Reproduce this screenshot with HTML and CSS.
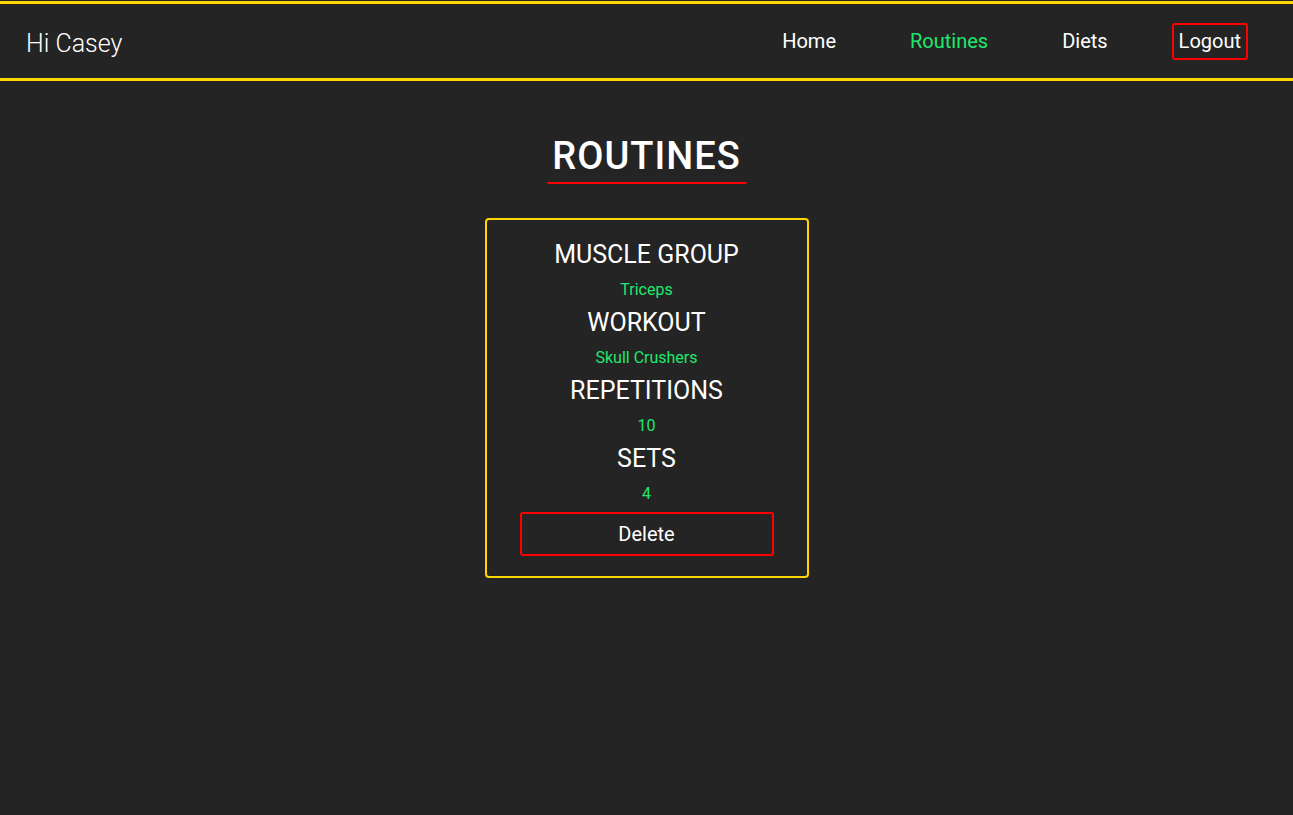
FILE: index.html
```html
<!DOCTYPE html>
<html lang="en">
<head>
<meta charset="utf-8">
<title>Routines</title>
<link rel="stylesheet" href="styles.css">
</head>
<body>
<header class="topbar">
  <div class="greeting">Hi Casey</div>
  <nav class="nav">
    <a class="nav-link" href="#">Home</a>
    <a class="nav-link active" href="#">Routines</a>
    <a class="nav-link" href="#">Diets</a>
    <a class="nav-link logout" href="#">Logout</a>
  </nav>
</header>
<main class="content">
  <h1 class="title">ROUTINES</h1>
  <section class="card">
    <div class="label">MUSCLE GROUP</div>
    <div class="value">Triceps</div>
    <div class="label">WORKOUT</div>
    <div class="value">Skull Crushers</div>
    <div class="label">REPETITIONS</div>
    <div class="value">10</div>
    <div class="label">SETS</div>
    <div class="value">4</div>
    <button class="delete">Delete</button>
  </section>
</main>
</body>
</html>
```

FILE: styles.css
```css
html, body {
  margin: 0;
  padding: 0;
  background: #242424;
  color: #ffffff;
  font-family: Roboto, "Liberation Sans", sans-serif;
}
body {
  min-height: 815px;
  padding-top: 1px;
  box-sizing: border-box;
}
.topbar {
  display: flex;
  align-items: center;
  justify-content: space-between;
  height: 74px;
  border-top: 3px solid #ffd600;
  border-bottom: 3px solid #ffd600;
  padding: 0 45px 0 26px;
}
.greeting {
  font-size: 25px;
  font-weight: 300;
  margin-top: 4px;
}
.nav {
  display: flex;
  align-items: center;
  gap: 60px;
}
.nav-link {
  color: #ffffff;
  text-decoration: none;
  font-size: 20px;
  line-height: 23px;
  padding: 5px 5px;
  border: 2px solid transparent;
  border-radius: 3px;
}
.nav-link.active {
  color: #1ee86c;
}
.nav-link.logout {
  border-color: #ff0000;
  margin-left: -3px;
}
.content {
  display: flex;
  flex-direction: column;
  align-items: center;
}
.title {
  margin: 53px 0 0;
  font-size: 38px;
  line-height: 44px;
  font-weight: 500;
  letter-spacing: 1px;
  width: 200px;
  text-align: center;
  padding-bottom: 4px;
  border-bottom: 2px solid #ff0000;
  border-radius: 0 0 2px 2px;
}
.card {
  margin-top: 34px;
  width: 320px;
  border: 2px solid #ffd600;
  border-radius: 4px;
  padding: 20px 0 20px;
  display: flex;
  flex-direction: column;
  align-items: center;
}
.label {
  font-size: 25px;
  line-height: 30px;
}
.value {
  font-size: 16px;
  line-height: 19px;
  color: #1ee86c;
  margin: 10px 0 9px;
}
.delete {
  margin-top: 0;
  width: 254px;
  height: 44px;
  background: transparent;
  color: #ffffff;
  font-family: Roboto, "Liberation Sans", sans-serif;
  font-size: 20px;
  border: 2px solid #ff0000;
  border-radius: 3px;
  cursor: pointer;
}
```
